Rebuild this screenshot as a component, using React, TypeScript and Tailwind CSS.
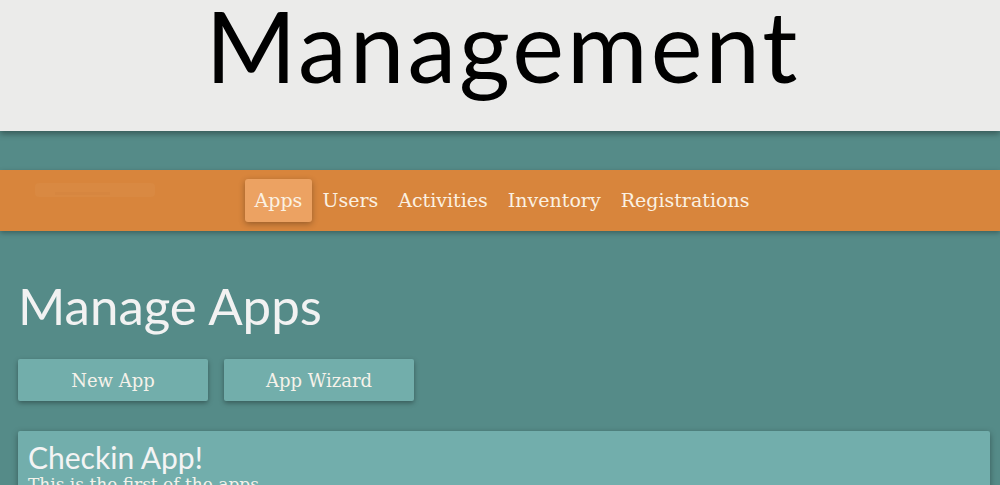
import React from "react";

export default function App() {
  const nav = ["Apps", "Users", "Activities", "Inventory", "Registrations"];
  return (
    <div className="w-[1000px] h-[485px] overflow-hidden bg-[#558b88]">
      <header className="relative z-10 h-[131px] bg-[#ebebea] shadow-[0_3px_6px_rgba(0,0,0,0.35)] flex justify-center">
        <h1 className="text-[98px] leading-none text-black mt-[-4px] tracking-[3px] pl-[6px] font-[Lato,sans-serif]">
          Management
        </h1>
      </header>
      <nav className="mt-[39px] h-[61px] bg-[#d8853c] shadow-[0_2px_5px_rgba(0,0,0,0.3)] relative flex items-center justify-center font-['DejaVu_Serif',serif]">
        <div className="absolute left-[35px] top-[13px] w-[120px] h-[14px] bg-[#d98942] rounded-sm flex items-end pl-[20px] pb-[2px]">
          <div className="w-[55px] h-[3px] bg-[#d68640]"></div>
        </div>
        <div className="flex items-center translate-x-[2px]">
          {nav.map((n, i) => (
            <div
              key={n}
              className={
                i === 0
                  ? "px-[10px] h-[43px] flex items-center bg-[#eca262] rounded-[3px] shadow-[0_2px_6px_rgba(0,0,0,0.3)] text-[#fbf1e2] text-[19px]"
                  : "px-[10px] h-[43px] flex items-center text-[#fbf1e2] text-[19px]"
              }
            >
              {n}
            </div>
          ))}
        </div>
      </nav>
      <main className="px-[18px]">
        <h2 className="mt-[49px] text-[51px] leading-none text-[#f2f2f2] font-[Lato,sans-serif]">Manage Apps</h2>
        <div className="mt-[28px] flex gap-[16px]">
          <button className="w-[190px] h-[42px] bg-[#72aeab] rounded-[2px] shadow-[0_2px_5px_rgba(0,0,0,0.35)] text-[#f6f2ea] text-[18px] font-['DejaVu_Serif',serif]">
            New App
          </button>
          <button className="w-[190px] h-[42px] bg-[#72aeab] rounded-[2px] shadow-[0_2px_5px_rgba(0,0,0,0.35)] text-[#f6f2ea] text-[18px] font-['DejaVu_Serif',serif]">
            App Wizard
          </button>
        </div>
        <div className="mt-[30px] w-[972px] h-[120px] bg-[#72aeac] rounded-[2px] shadow-[0_2px_6px_rgba(0,0,0,0.35)] px-[10px] pt-[10px]">
          <div className="text-[30px] leading-[32px] text-[#f4f4f4] font-[Lato,sans-serif]">Checkin App!</div>
          <div className="text-[17px] leading-[22px] text-[#f4f2ea] font-['DejaVu_Serif',serif]">This is the first of the apps</div>
        </div>
      </main>
    </div>
  );
}
